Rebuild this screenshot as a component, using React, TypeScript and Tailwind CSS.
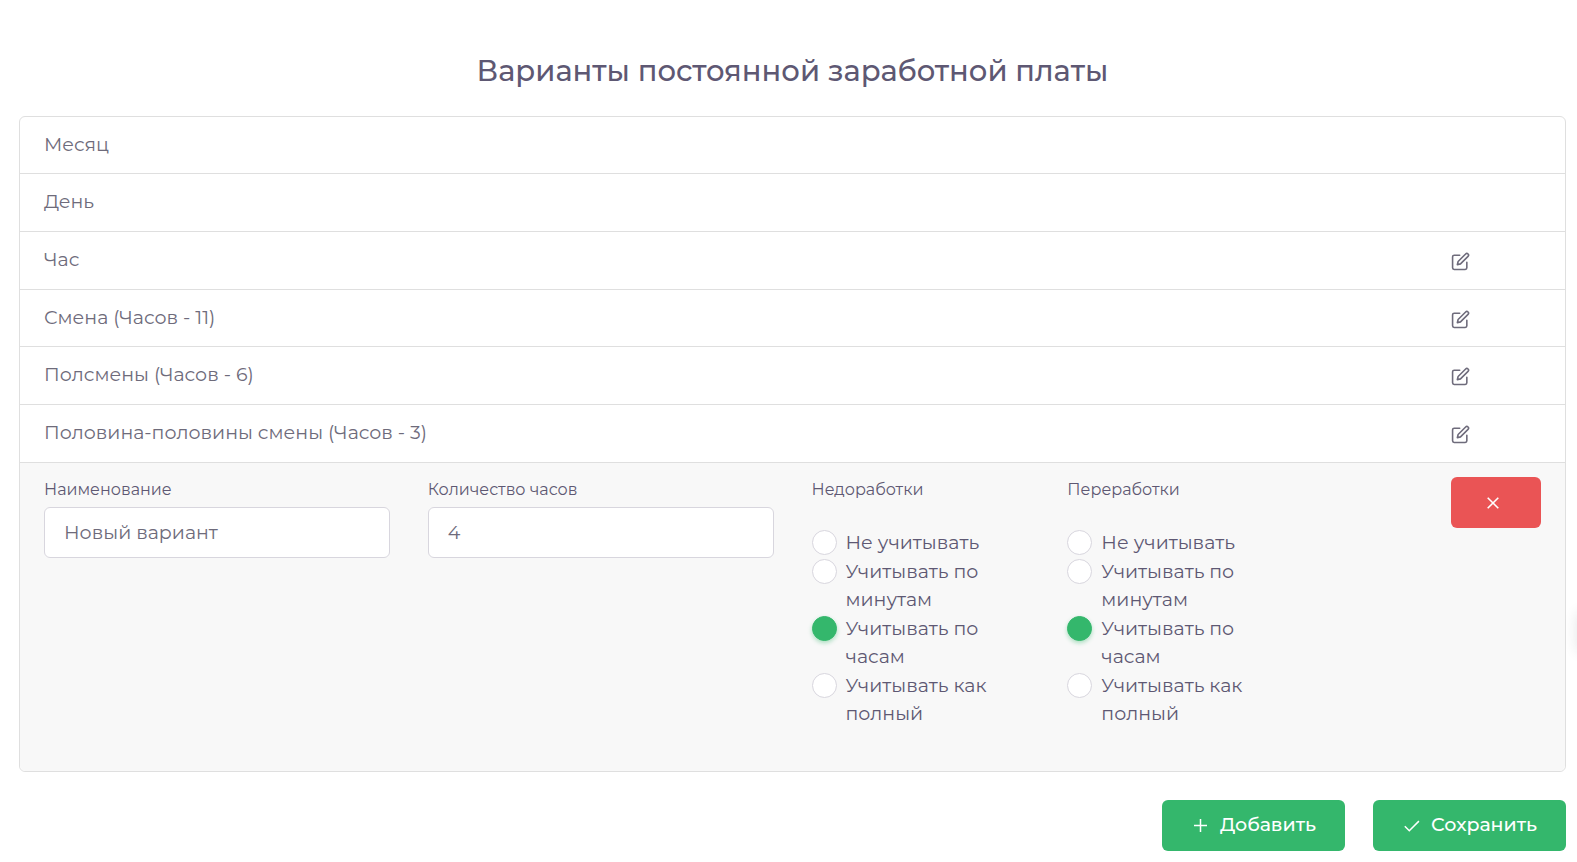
import React, { useState } from 'react';
import { FiEdit } from 'react-icons/fi';

interface Variant {
  id: number;
  name: string;
  editable: boolean;
}

interface RadioGroupProps {
  title: string;
  name: string;
  value: string;
  onChange: (value: string) => void;
}

const VARIANTS: Variant[] = [
  { id: 1, name: 'Месяц', editable: false },
  { id: 2, name: 'День', editable: false },
  { id: 3, name: 'Час', editable: true },
  { id: 4, name: 'Смена (Часов - 11)', editable: true },
  { id: 5, name: 'Полсмены (Часов - 6)', editable: true },
  { id: 6, name: 'Половина-половины смены (Часов - 3)', editable: true },
];

const OPTIONS = [
  { value: 'none', label: 'Не учитывать' },
  { value: 'minutes', label: 'Учитывать по минутам' },
  { value: 'hours', label: 'Учитывать по часам' },
  { value: 'full', label: 'Учитывать как полный' },
];

const RadioGroup: React.FC<RadioGroupProps> = ({ title, name, value, onChange }) => (
  <fieldset className="col-span-2 min-w-0">
    <legend className="mb-[26px] text-base leading-[26px]">{title}</legend>
    <div className="flex flex-col gap-px text-[19px] leading-7">
      {OPTIONS.map((option) => (
        <label key={option.value} className="flex items-start gap-[9px]">
          <input
            type="radio"
            name={name}
            value={option.value}
            checked={value === option.value}
            onChange={() => onChange(option.value)}
            className="mt-px size-[25px] shrink-0 appearance-none rounded-full border border-[#d8d6de] bg-white checked:border-[#34b76c] checked:bg-[#34b76c] checked:shadow-[0_2px_4px_rgba(52,183,108,0.4)]"
          />
          <span>{option.label}</span>
        </label>
      ))}
    </div>
  </fieldset>
);

export default function App() {
  const [name, setName] = useState('Новый вариант');
  const [hours, setHours] = useState('4');
  const [underwork, setUnderwork] = useState('hours');
  const [overwork, setOverwork] = useState('hours');

  const labelClass = 'mb-1 block text-base leading-[26px]';
  const inputClass =
    'h-[51px] w-full rounded-md border border-[#d8d6de] bg-white px-[19px] text-[19px] text-[#6e6b7b] outline-none focus:border-[#34b76c]';
  const buttonClass =
    'flex h-[51px] items-center justify-center gap-[10px] rounded-md bg-[#34b76c] px-[29px] text-[19px] font-medium text-white';

  return (
    <main className="pt-[51px] pr-[11px] pb-[11px] pl-[19px] font-['Montserrat','Inter',sans-serif] text-[#5e5873]">
      <h1 className="mb-[25px] text-center text-[29px] leading-10 font-medium">
        Варианты постоянной заработной платы
      </h1>

      <ul className="rounded-md border border-[#dfdfdf]">
        {VARIANTS.map((variant) => (
          <li
            key={variant.id}
            className="grid h-[58px] grid-cols-12 items-center gap-x-[38px] border-b border-[#dfdfdf] px-6 text-[19px] text-[#6e6b7b] nth-[3n+1]:h-[57px]"
          >
            <span className="col-span-11">{variant.name}</span>
            {variant.editable && (
              <button type="button" aria-label="Редактировать" className="justify-self-start pt-0.5">
                <FiEdit className="size-[19px]" />
              </button>
            )}
          </li>
        ))}

        <li className="grid grid-cols-12 items-start gap-x-[38px] rounded-b-md bg-[#f8f8f8] px-6 pt-[14px] pb-[43px]">
          <div className="col-span-3">
            <label htmlFor="variant-name" className={labelClass}>
              Наименование
            </label>
            <input
              id="variant-name"
              type="text"
              value={name}
              onChange={(e) => setName(e.target.value)}
              className={inputClass}
            />
          </div>
          <div className="col-span-3">
            <label htmlFor="variant-hours" className={labelClass}>
              Количество часов
            </label>
            <input
              id="variant-hours"
              type="text"
              inputMode="numeric"
              value={hours}
              onChange={(e) => setHours(e.target.value)}
              className={inputClass}
            />
          </div>
          <RadioGroup title="Недоработки" name="underwork" value={underwork} onChange={setUnderwork} />
          <RadioGroup title="Переработки" name="overwork" value={overwork} onChange={setOverwork} />
          <button
            type="button"
            aria-label="Удалить"
            className="col-start-12 flex h-[51px] items-center justify-center rounded-md bg-[#ea5455] pr-1.5 text-white"
          >
            <svg viewBox="0 0 12 12" className="size-3" fill="none" stroke="currentColor" strokeWidth="1.6">
              <path d="M.7.7l10.6 10.6M11.3.7L.7 11.3" />
            </svg>
          </button>
        </li>
      </ul>

      <div className="mt-7 flex justify-end gap-7">
        <button type="button" className={buttonClass}>
          <svg viewBox="0 0 19 19" className="size-[19px]" fill="none" stroke="currentColor" strokeWidth="1.5">
            <path d="M9.5 3v13M3 9.5h13" />
          </svg>
          Добавить
        </button>
        <button type="button" className={buttonClass}>
          <svg viewBox="0 0 19 19" className="size-[19px]" fill="none" stroke="currentColor" strokeWidth="1.5">
            <path d="M2.8 10.2l4.5 4.5 9.6-9.6" />
          </svg>
          Сохранить
        </button>
      </div>

      {/* settings drawer parked behind the right edge */}
      <div className="fixed top-[612px] left-full h-10 w-10 rounded-l-md shadow-[0_0_14px_rgba(34,41,47,0.12)]" />
    </main>
  );
}
